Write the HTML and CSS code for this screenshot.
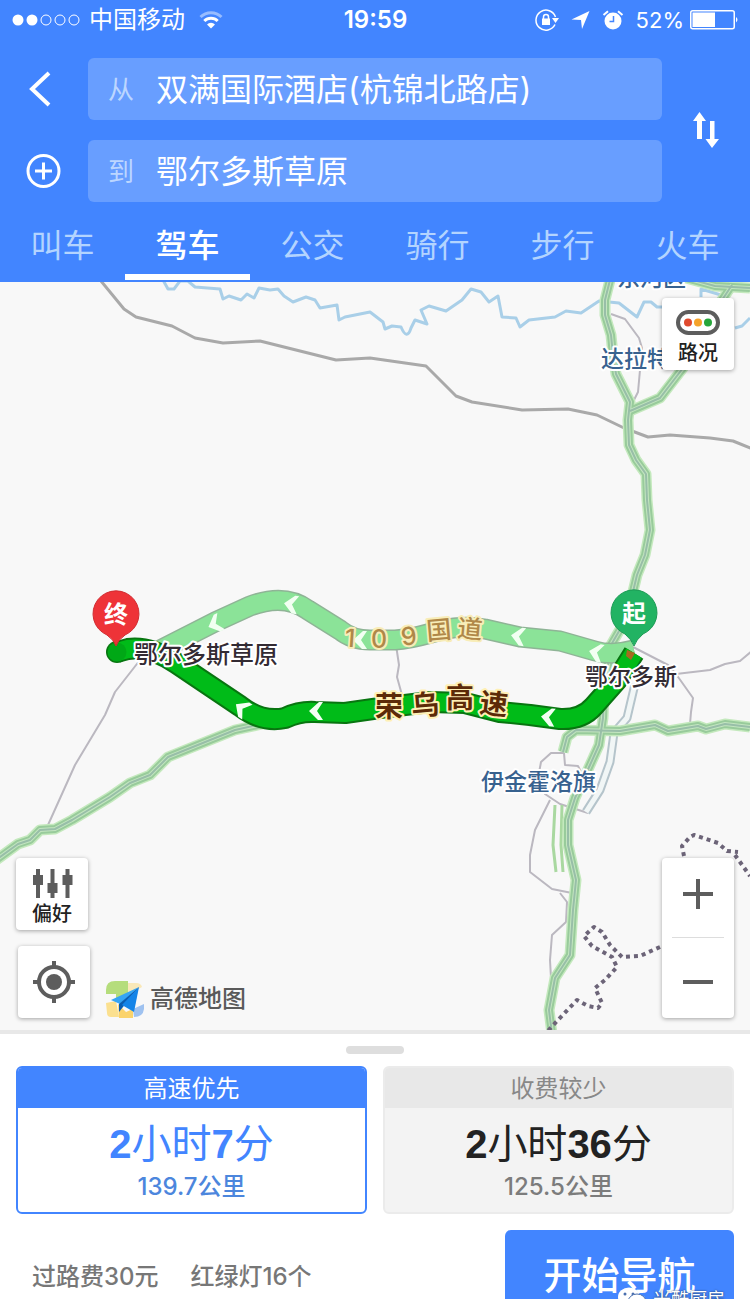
FILE: index.html
```html
<!DOCTYPE html>
<html lang="zh-CN">
<head>
<meta charset="utf-8">
<meta name="viewport" content="width=device-width, initial-scale=1">
<title>路线规划</title>
<link rel="stylesheet" href="styles.css">
</head>
<body>
<header class="header">
  <div class="status">
    <div class="status-left">
      <svg class="signal" width="68" height="14" viewBox="0 0 68 14" aria-hidden="true">
        <g fill="#fff"><circle cx="6" cy="7" r="5.5"/><circle cx="20" cy="7" r="5.5"/></g>
        <g fill="none" stroke="#fff"><circle cx="34" cy="7" r="5"/><circle cx="48" cy="7" r="5"/><circle cx="62" cy="7" r="5"/></g>
      </svg>
      <span>中国移动</span>
      <svg class="wifi" width="24" height="18" viewBox="0 0 24 18" fill="none" stroke="#fff" stroke-width="3" aria-hidden="true">
        <path d="M1.5 6a15 15 0 0 1 21 0" opacity=".45"/><path d="M5.3 10a9.6 9.6 0 0 1 13.4 0"/><path d="M12 17.5l-4-4a5.7 5.7 0 0 1 8 0z" fill="#fff" stroke="none"/>
      </svg>
    </div>
    <time class="clock">19:59</time>
    <div class="status-right">
      <svg width="24" height="22" viewBox="0 0 24 22" fill="none" stroke="#fff" aria-hidden="true">
        <path d="M20 15.500A10 10 0 1 1 20.500 8" stroke-width="1.500"/><path d="M17 9h7l-3.500 5z" fill="#fff" stroke="none"/>
        <rect x="7" y="9.500" width="8" height="6.500" fill="#fff" stroke="none"/><path d="M8.500 10V8a2.500 2.500 0 0 1 5 0v2" stroke-width="1.500"/>
      </svg>
      <svg width="19" height="20" viewBox="0 0 19 20" fill="#fff" aria-hidden="true"><path d="M18.500 1L11 19l-1-9-9.500-.5z"/></svg>
      <svg width="22" height="20" viewBox="0 0 22 20" aria-hidden="true"><circle cx="11" cy="11" r="8.500" fill="#fff"/><path d="M1.500 5L6 1.200M20.500 5L16 1.200" stroke="#fff" stroke-width="2"/><path d="M11.500 6v5.500H7.500" fill="none" stroke="#4285ff" stroke-width="1.500"/></svg>
      <span class="percent">52%</span>
      <svg class="battery" width="49" height="20" viewBox="0 0 49 20" aria-hidden="true"><rect x=".75" y=".75" width="43.500" height="18" rx="2" fill="none" stroke="#fff" stroke-width="1.500"/><path d="M2.500 2.500H25v14.500H2.500zM46 7q3 2.500 0 5.500z" fill="#fff"/></svg>
    </div>
  </div>
  <form class="search">
    <button class="icon-button" type="button" aria-label="返回"><svg width="34" height="36" viewBox="0 0 34 36" fill="none" stroke="#fff" stroke-width="4"><path d="M24 2L7 18l17 16"/></svg></button>
    <div class="field"><label for="from">从</label><input id="from" type="text" value="双满国际酒店(杭锦北路店)"></div>
    <button class="swap icon-button" type="button" aria-label="交换起终点"><svg width="28" height="38" viewBox="0 0 28 38" fill="#fff"><path d="M7.500 1L14 10H10V28H5V10H1zM18 10h4.500V28H27l-7 9-6.500-9H18z"/></svg></button>
    <button class="icon-button" type="button" aria-label="添加途经点"><svg width="36" height="36" viewBox="0 0 36 36" fill="none" stroke="#fff" stroke-width="3"><circle cx="18.500" cy="18" r="15.500"/><path d="M10 18h17M18.500 9.500v17"/></svg></button>
    <div class="field"><label for="to">到</label><input id="to" type="text" value="鄂尔多斯草原"></div>
  </form>
  <nav class="tabs">
    <button class="tab" type="button">叫车</button>
    <button class="tab tab-active" type="button" aria-current="page">驾车</button>
    <button class="tab" type="button">公交</button>
    <button class="tab" type="button">骑行</button>
    <button class="tab" type="button">步行</button>
    <button class="tab" type="button">火车</button>
  </nav>
</header>

<main class="map">
  <svg class="canvas" viewBox="0 282 750 752" preserveAspectRatio="xMidYMid slice" role="img" aria-label="路线地图">
    <defs>
      <path id="h1" d="M610 280L605 300V315L611 335 613 355 616 374 630 402 628 420 629 445 636 460 646 474 647 500 650 530 645 555 637 575 631 600 622 626 611 645 604 690 603 718 599 745 590 765 575 798 568 820V845L576 880 573 910 570 955 555 978 549 1010 552 1034"/>
      <path id="h2" d="M732 285L720 303 700 340 683 368 660 398 630 411"/>
      <path id="h3" d="M686 278L715 286 750 288"/>
      <path id="h4" d="M563 752L567 737 576 730 620 731 655 725 668 731 698 726 706 729 725 724 750 727"/>
      <path id="h5" d="M262 724L235 730 168 757 150 775 130 783 110 797 72 820 55 829 40 830 30 840 18 844 -4 860"/>
      <path id="r1" d="M160 650L215 622 250 606Q285 593 308 610L340 630Q352 640 370 640H395C430 638 445 622 485 629L520 637 560 641 595 651Q612 656 634 650"/>
      <path id="r2" d="M117 652L128 649Q150 646 176 663L240 706Q262 723 285 718 300 711 315 712L345 713 380 708 430 702 465 703 500 712 530 715 560 719Q582 720 594 706L617 680 634 653"/>
      <path id="chev" d="M5 -9H9L3 0 9 9H4L-5 0Z"/>
    </defs>
    <g class="river"><path d="M163 280l5 9h6l6-8h8l7 6 25 2 3 10 6-3 12 4 6-6 7 4 5-10 11 2 8-1 6 7 9 6 13-5 9 3 5 8 17-3 2 15 6-3 25-5 13 10 2 7 7-3 9 1q6 14 10 1l4-8 12 4-6-14 8-4 17 5 16-11 9-11 10 3 8 10 9-6 4 21 14 1 4 9 9-7 26-3 11-6 15 2 18-12 20 2 18 14 7-15h7l6 5h12M701 297v-8l20 6M735 328l7-2 8-8"/></g>
    <path class="road" d="M101 281l23 28 12 8 36 9 23 12 28 5 37-2 76 19 34-2 56 8 30 30 16 6 50 8 46-1 29 6 27 13 24 9 22-2 40 3 23 3 20 8"/>
    <g class="lane">
      <path d="M611 314l14 5 14 19 3 10-4 44-7 14"/>
      <path d="M140 660l-25 32-10 23-30 50-27 60M396 645l3 20-2 12 5 18"/>
      <path d="M633 647l35 18 8 9 34-4 15-6 15-3 12-10M676 674l17 24-2 14-1 12"/>
      <path d="M564 753h-13l-10 9-3 16 7 16 15 10 28 9M564 753l1 12 13 1 4 8M550 800l-15 30-5 25v17l22 17 20 4M560 893l7 9-1 20-14 13-2 25 1 18"/>
    </g>
    <g class="double"><path d="M635 684l-8 34-13 15-4 29-10 28-14 22"/></g>
    <g class="double double-inner"><path d="M635 684l-8 34-13 15-4 29-10 28-14 22"/></g>
    <path class="green-lane" d="M555 805l-2 40 3 27M562 805l-1 40 2 27"/>
    <g class="highway highway-edge"><use href="#h1"/><use href="#h2"/><use href="#h3"/><use href="#h4"/><use href="#h5"/></g>
    <g class="highway highway-body"><use href="#h1"/><use href="#h2"/><use href="#h3"/><use href="#h4"/><use href="#h5"/></g>
    <g class="highway highway-lanes"><use href="#h1"/><use href="#h2"/><use href="#h3"/><use href="#h4"/><use href="#h5"/></g>
    <g class="highway highway-center"><use href="#h1"/><use href="#h2"/><use href="#h3"/><use href="#h4"/><use href="#h5"/></g>
    <path class="border-line" d="M684 856l-2-10 8-9 4-2 12 4 12 4 9 8 11 1M735 855l15 21M660 947l-20 9-18 1-12-12-8-13-8-5-10 9 8 10 20 11 5 10-12 13-10 8 7 15-4 5-10-2-11-6-19 20-13 14"/>

    <use class="alt-edge" href="#r1"/><use class="alt-fill" href="#r1"/>
    <use class="route-edge" href="#r2"/><circle class="route-end" cx="117" cy="652" r="11"/><use class="route-fill" href="#r2"/><circle class="route-cap" cx="117" cy="652" r="9.500"/>
    <g fill="#f2fff2">
      <use href="#chev" transform="translate(213 625) rotate(-25)"/><use href="#chev" transform="translate(289 604) rotate(8)"/>
      <use href="#chev" transform="translate(240 707) rotate(35)"/><use href="#chev" transform="translate(314 711)"/>
      <use href="#chev" transform="translate(358 640)"/><use href="#chev" transform="translate(516 636) rotate(8)"/>
      <use href="#chev" transform="translate(594 652) rotate(12)"/><use href="#chev" transform="translate(546 717) rotate(5)"/>
    </g>

    <g class="place"><text x="617" y="286">东河区</text><text x="601" y="367">达拉特</text><text x="481" y="790">伊金霍洛旗</text></g>
    <g class="city"><text x="134" y="663">鄂尔多斯草原</text><text x="585" y="685">鄂尔多斯</text></g>
    <g class="road-name road-name-alt">
      <text x="350" y="647" transform="rotate(4 350 638)">1</text><text x="379" y="648">0</text><text x="409" y="645" transform="rotate(-8 409 637)">9</text>
      <text x="439" y="639" transform="rotate(-5 439 630)">国</text><text x="470" y="638" transform="rotate(5 470 629)">道</text>
    </g>
    <g class="road-name">
      <text x="389" y="717">荣</text><text x="425" y="715" transform="rotate(-5 425 705)">乌</text><text x="460" y="708">高</text><text x="494" y="714" transform="rotate(7 494 704)">速</text>
    </g>
    <g class="pin">
      <path fill="#ee3338" stroke="#d12b30" d="M116 646Q114 640 107 635A23 23 0 1 1 125 635Q118 640 116 646Z"/><text x="116" y="623">终</text>
      <path fill="#22b363" stroke="#1b9a54" d="M634 646Q632 640 625 634A23 23 0 1 1 643 634Q636 640 634 646Z"/><text x="634" y="622">起</text>
    </g>
    <path fill="#a66a20" d="M627 650l8 3-4 7-5-4z"/>
  </svg>

  <div class="tools tools-top">
    <button class="tool tool-labelled" type="button">
      <svg width="44" height="26" viewBox="0 0 44 26" aria-hidden="true"><rect x="2" y="2" width="40" height="21" rx="10.500" fill="#fff" stroke="#5d5d5d" stroke-width="4"/><circle cx="12" cy="12.500" r="4" fill="#e04a2e"/><circle cx="22" cy="12.500" r="4" fill="#f5a32b"/><circle cx="32" cy="12.500" r="4" fill="#27a63b"/></svg>
      <span>路况</span>
    </button>
  </div>
  <div class="tools tools-left">
    <button class="tool tool-labelled" type="button">
      <svg width="42" height="32" viewBox="0 0 42 32" fill="#5d5d5d" aria-hidden="true"><path d="M5 1h4v6h3v10H9v13H5V17H2V7h3zM19.500 1h4v14h3v10h-3v5h-4v-5h-3V15h3zM34.500 1h4v6h3v10h-3v13h-4V17h-3V7h3z"/></svg>
      <span>偏好</span>
    </button>
    <div class="locate-row">
      <button class="tool" type="button" aria-label="定位"><svg width="42" height="42" viewBox="0 0 42 42" fill="none" stroke="#5d5d5d" stroke-width="4"><circle cx="21" cy="21" r="15"/><circle cx="21" cy="21" r="8" fill="#5d5d5d" stroke="none"/><path d="M21 0v7M21 35v7M0 21h7M35 21h7"/></svg></button>
      <div class="brand">
        <svg width="38" height="38" viewBox="0 0 38 38" aria-hidden="true">
          <path d="M0 10Q0 1 9 1h13v12L10 19v-5H0z" fill="#b5dd7c"/><path d="M22 3h8q5 0 6 4L22 15z" fill="#f9e8b8"/><path d="M0 23l10-2 3 16H5q-4 0-4-4z" fill="#fbe08f"/><path d="M27 29l11-5v5q-1 8-10 8z" fill="#9fc2f0"/><path d="M12 24l8 8 7-3v9H13z" fill="#fbd36b"/>
          <path d="M33 7L5 20l9 4z" fill="#35a5f5"/><path d="M33 7L13 24v8z" fill="#0b5db0"/><path d="M33 7L16 25l12 7z" fill="#1484e8"/>
        </svg>
        <span>高德地图</span>
      </div>
    </div>
  </div>
  <div class="zoom">
    <button type="button" aria-label="放大"><svg width="30" height="30" viewBox="0 0 30 30" stroke="#5d5d5d" stroke-width="4"><path d="M0 15h30M15 0v30"/></svg></button>
    <button type="button" aria-label="缩小"><svg width="30" height="30" viewBox="0 0 30 30" stroke="#5d5d5d" stroke-width="4"><path d="M0 15h30"/></svg></button>
  </div>
</main>

<section class="sheet">
  <div class="handle"></div>
  <div class="routes">
    <button class="route route-selected" type="button">
      <span class="route-title">高速优先</span>
      <span class="route-time"><b>2</b>小时<b>7</b>分</span>
      <span class="route-distance">139.7公里</span>
    </button>
    <button class="route" type="button">
      <span class="route-title">收费较少</span>
      <span class="route-time"><b>2</b>小时<b>36</b>分</span>
      <span class="route-distance">125.5公里</span>
    </button>
  </div>
  <div class="actions">
    <div class="facts"><span>过路费30元</span><span>红绿灯16个</span></div>
    <button class="start" type="button">开始导航</button>
    <div class="watermark">
      <svg width="32" height="26" viewBox="0 0 32 26" aria-hidden="true"><ellipse cx="12" cy="10" rx="11" ry="9.500" fill="#fff"/><circle cx="8" cy="7" r="1.500" fill="#4a6fae"/><circle cx="16" cy="7" r="1.500" fill="#4a6fae"/><ellipse cx="20" cy="15" rx="9" ry="8" fill="#fff" stroke="#4a6fae"/></svg>
      <span>米酷厨房</span>
    </div>
  </div>
</section>
</body>
</html>
```
FILE: styles.css
```css
* { box-sizing: border-box; }

body {
  margin: 0;
  height: 100vh;
  display: flex;
  flex-direction: column;
  overflow: hidden;
  background: #fff;
  font-family: Inter, "Noto Sans CJK SC", sans-serif;
  color: #222;
}

button {
  border: 0;
  padding: 0;
  background: none;
  font: inherit;
  color: inherit;
}

svg { display: block; flex: none; }

/* Header */
.header { flex: none; background: #4285ff; color: #fff; }

.status {
  display: grid;
  grid-template-columns: 1fr auto 1fr;
  align-items: center;
  height: 40px;
  padding: 0 11px 0 12px;
  font-size: 24px;
  line-height: 32px;
}
.status-left, .status-right { display: flex; align-items: center; gap: 9px; }
.wifi { margin-left: 5px; }
.status-right { justify-content: flex-end; gap: 12px; }
.percent { font-size: 22px; }
.battery { margin-left: -6px; }
.clock { font-weight: 600; }

.search {
  display: grid;
  grid-template-columns: 88px minmax(0, 1fr) 88px;
  grid-template-rows: 62px 62px;
  row-gap: 20px;
  padding-top: 18px;
}
.icon-button { display: flex; align-items: center; padding-left: 25px; }
.swap { grid-column: 3; grid-row: 1 / span 2; padding-left: 30px; }

.field {
  display: flex;
  align-items: center;
  gap: 22px;
  padding: 0 20px 4px;
  border-radius: 6px;
  background: #689eff;
}
.field label { font-size: 26px; color: #bcd6ff; }
.field input {
  flex: 1;
  min-width: 0;
  border: 0;
  padding: 0;
  outline: 0;
  background: none;
  font: inherit;
  font-size: 32px;
  color: #fff;
}

.tabs { display: grid; grid-template-columns: repeat(6, 1fr); height: 80px; padding-bottom: 2px; }
.tab { border-bottom: 6px solid transparent; padding-top: 10px; font-size: 32px; color: #b3d4ff; }
.tab-active { border-color: #fff; font-weight: 500; color: #fff; }

/* Map */
.map { position: relative; flex: none; aspect-ratio: 750 / 752; overflow: hidden; background: #f8f8f8; border-bottom: 4px solid #e8e8e8; }
.canvas { position: absolute; inset: 0; width: 100%; }
.canvas path, .canvas use { stroke-linejoin: round; }

.river { fill: none; stroke: #a9cfe8; stroke-width: 3; }
.road { fill: none; stroke: #a9a9a9; stroke-width: 3; }
.lane { fill: none; stroke: #bbb8c0; stroke-width: 2; }
.double { fill: none; stroke: #b5c4cb; stroke-width: 9; }
.double-inner { stroke: #f1f6f6; stroke-width: 5; }
.green-lane { fill: none; stroke: #a9d8a0; stroke-width: 3; }
.highway { fill: none; }
.highway-edge { stroke: #c4e9bd; stroke-width: 11; }
.highway-body { stroke: #98cb9b; stroke-width: 8; }
.highway-lanes { stroke: #c3e5c0; stroke-width: 4; }
.highway-center { stroke: #98bea8; stroke-width: 2; }
.border-line { fill: none; stroke: #6c6478; stroke-width: 4; stroke-dasharray: 4 4; }

.alt-edge { fill: none; stroke: #8fb496; stroke-width: 21; }
.alt-fill { fill: none; stroke: #8be398; stroke-width: 18; }
.route-edge { fill: none; stroke: #087510; stroke-width: 22; }
.route-fill { fill: none; stroke: #00bb18; stroke-width: 18; }
.route-end { fill: #087510; }
.route-cap { fill: #00a816; }

.place, .city, .road-name { paint-order: stroke; stroke: #fff; stroke-width: 4; stroke-linejoin: round; font-weight: 500; }
.place { fill: #38628f; font-size: 23px; }
.city { fill: #332b33; font-size: 24px; }
.city text:last-child { font-size: 23px; }
.road-name { fill: #5c2a08; stroke: #fff0b5; text-anchor: middle; font-size: 28px; font-weight: 700; }
.road-name-alt { fill: #b08848; stroke: #f8edb8; font-size: 25px; font-weight: 500; }
.pin text { fill: #fff; text-anchor: middle; font-size: 24px; font-weight: 700; }

.tool, .zoom {
  border-radius: 4px;
  background: #fff;
  box-shadow: 0 1px 4px rgba(0, 0, 0, .35);
}
.tool {
  display: flex;
  flex-direction: column;
  align-items: center;
  justify-content: center;
  width: 72px;
  height: 72px;
  font-size: 20px;
  line-height: 28px;
  font-weight: 500;
}
.tool-labelled { padding-top: 8px; }
.tools { position: absolute; }
.tools-top { top: 16px; right: 16px; }
.tools-top .tool { gap: 3px; }
.tools-left { left: 16px; bottom: 12px; display: grid; gap: 16px; }
.locate-row { display: flex; align-items: flex-end; gap: 16px; padding-left: 2px; }
.brand { display: flex; align-items: center; gap: 6px; font-size: 24px; line-height: 38px; font-weight: 500; color: #5a5a5a; }
.zoom { position: absolute; right: 16px; bottom: 12px; display: grid; grid-template-rows: 80px 80px; width: 72px; }
.zoom button { display: flex; align-items: center; justify-content: center; }
.zoom button:first-child { margin: 0 10px; border-bottom: 1px solid #ddd; padding-bottom: 8px; }
.zoom button:last-child { padding-top: 8px; }

/* Bottom sheet */
.sheet { flex: 1; min-height: 0; overflow: hidden; padding: 12px 16px 0; }
.handle { width: 58px; height: 8px; margin: 0 auto 12px; border-radius: 4px; background: #dedede; }

.routes { display: grid; grid-template-columns: 1fr 1fr; gap: 16px; }
.route {
  display: flex;
  flex-direction: column;
  height: 148px;
  overflow: hidden;
  border: 2px solid #ebebeb;
  border-radius: 6px;
  background: #f3f3f3;
  text-align: center;
}
.route-title { align-self: stretch; height: 40px; background: #e8e8e8; font-size: 24px; line-height: 42px; color: #888; }
.route-time { padding-top: 10px; font-size: 40px; line-height: 52px; }
.route-time b { font-family: "Liberation Sans", sans-serif; }
.route-distance { font-size: 24px; line-height: 34px; font-weight: 500; color: #7c7c7c; }
.route-selected { border-color: #4285ff; background: #fff; color: #4285ff; }
.route-selected .route-title { background: #4285ff; color: #fff; }
.route-selected .route-distance { color: #4c86dd; }

.actions { position: relative; display: flex; align-items: center; justify-content: space-between; padding: 16px 0 0 16px; }
.facts { display: flex; gap: 32px; font-size: 24px; font-weight: 500; color: #777; }
.start { width: 229px; height: 88px; border-radius: 6px; background: #4285ff; padding-bottom: 4px; font-size: 38px; font-weight: 500; color: #fff; }
.watermark { position: absolute; top: 72px; right: 9px; display: flex; align-items: center; gap: 4px; font-size: 18px; line-height: 28px; color: #fff; text-shadow: 0 0 2px #234; }
```
